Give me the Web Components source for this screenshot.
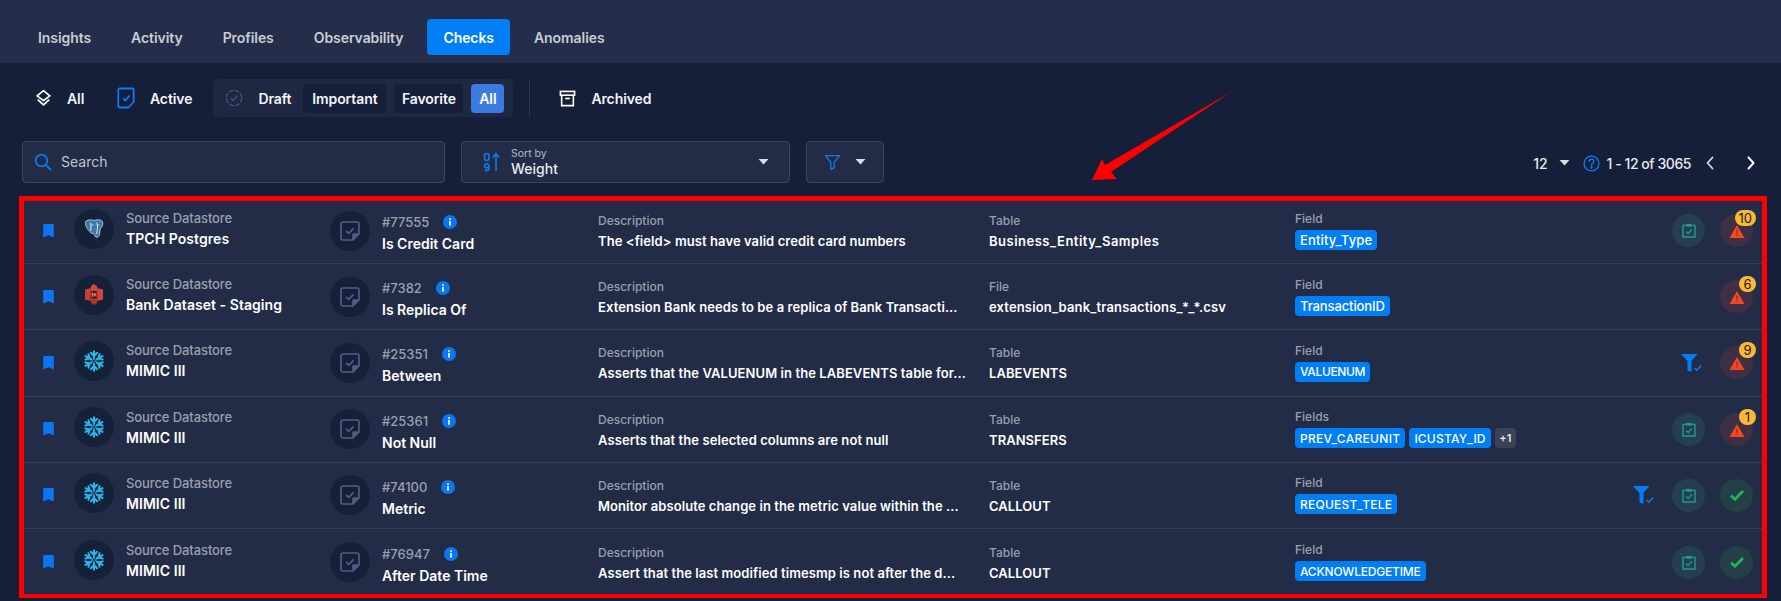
<!DOCTYPE html>
<html><head><meta charset="utf-8"><title>Checks</title>
<style>
html,body{margin:0;padding:0;background:#151f3a;font-family:Inter,"Noto Sans",sans-serif;color:#fff}
body{width:1781px;height:601px;overflow:hidden;position:relative}
</style></head><body>
<q-tabs>
  <q-tab>Insights</q-tab><q-tab>Activity</q-tab><q-tab>Profiles</q-tab><q-tab>Observability</q-tab><q-tab active>Checks</q-tab><q-tab>Anomalies</q-tab>
</q-tabs>
<q-filters></q-filters>
<q-toolbar></q-toolbar>
<q-list>
  <q-row src="pg" source="TPCH Postgres" cid="#77555" name="Is Credit Card" desc="The &lt;field&gt; must have valid credit card numbers" tlabel="Table" table="Business_Entity_Samples" tls=".5" flabel="Field" clip alert="10"><q-chip style="font-size:13px;letter-spacing:.15px">Entity_Type</q-chip></q-row>
  <q-row src="rs" source="Bank Dataset - Staging" cid="#7382" name="Is Replica Of" desc="Extension Bank needs to be a replica of Bank Transacti..." tlabel="File" table="extension_bank_transactions_*_*.csv" tls=".15" flabel="Field" alert="6"><q-chip style="font-size:13px;letter-spacing:-.1px">TransactionID</q-chip></q-row>
  <q-row src="sf" source="MIMIC III" cid="#25351" name="Between" desc="Asserts that the VALUENUM in the LABEVENTS table for..." tlabel="Table" table="LABEVENTS" flabel="Field" funnel alert="9"><q-chip style="letter-spacing:-.35px">VALUENUM</q-chip></q-row>
  <q-row src="sf" source="MIMIC III" cid="#25361" name="Not Null" desc="Asserts that the selected columns are not null" tlabel="Table" table="TRANSFERS" flabel="Fields" clip alert="1"><q-chip style="letter-spacing:.3px">PREV_CAREUNIT</q-chip><q-chip style="letter-spacing:.2px">ICUSTAY_ID</q-chip><q-chip more>+1</q-chip></q-row>
  <q-row src="sf" source="MIMIC III" cid="#74100" name="Metric" desc="Monitor absolute change in the metric value within the ..." tlabel="Table" table="CALLOUT" flabel="Field" funnel clip ok><q-chip style="letter-spacing:.25px">REQUEST_TELE</q-chip></q-row>
  <q-row src="sf" source="MIMIC III" cid="#76947" name="After Date Time" desc="Assert that the last modified timesmp is not after the d..." tlabel="Table" table="CALLOUT" flabel="Field" clip ok><q-chip style="letter-spacing:-.2px">ACKNOWLEDGETIME</q-chip></q-row>
</q-list>
<q-arrow></q-arrow>
<script>
const arm='<path d="M11 1.2V8M7.900 2.800 11 5.900 14.100 2.800"/>';
const ICONS={
 layers:'<svg viewBox="0 0 16 18" fill="none" stroke="#fff" stroke-width="1.700" stroke-linejoin="round"><path d="M8 1.500 14 6.500 8 11 2 6.500Z"/><path d="M2.500 10 8 15 13.500 10"/></svg>',
 active:'<svg viewBox="0 0 18 22" fill="none" stroke="#0a7bf0" stroke-width="1.800" stroke-linejoin="round"><path d="M2.500 1.500H15.500a1.200 1.200 0 0 1 1.200 1.200V15L11.500 20.500H2.500a1.200 1.200 0 0 1-1.200-1.200V2.700a1.200 1.200 0 0 1 1.200-1.200Z"/><path d="M6 11.500 8.300 13.600 12.500 8.500"/></svg>',
 draft:'<svg viewBox="0 0 20 20" fill="none" stroke="#4c5678" stroke-width="1.400"><circle cx="10" cy="10" r="8.500" stroke-dasharray="5 1.800"/><path d="M6.500 10.200 9 12.600 13.500 7.400"/></svg>',
 archive:'<svg viewBox="0 0 18 18" fill="none" stroke="#fff" stroke-width="1.700"><rect x="1.500" y="1.500" width="15" height="4"/><path d="M2.800 5.500V16.500H15.200V5.500"/><path d="M6.500 9H11.500"/></svg>',
 search:'<svg viewBox="0 0 18 18" fill="none" stroke="#0a7bf0" stroke-width="1.800" stroke-linecap="round"><circle cx="7.500" cy="7.500" r="5.800"/><path d="M11.800 11.800 16.500 16.500"/></svg>',
 sort:'<svg viewBox="0 0 18 20" fill="none" stroke="#0a7bf0" stroke-width="1.600"><rect x="1.500" y="1.800" width="4.400" height="6.400" rx="1.200"/><circle cx="3.700" cy="13.800" r="2.100"/><path d="M5.800 14V17.200Q5.800 18.400 4.400 18.400H1.800"/><path d="M13 19V2M9.800 5.400 13 1.800 16.200 5.400"/></svg>',
 filter:'<svg viewBox="0 0 18 18" fill="none" stroke="#0a7bf0" stroke-width="1.400" stroke-linejoin="round"><path d="M1.500 1.800H16.500L10.800 8.800V14.500L7.200 16.500V8.800Z"/></svg>',
 caret:'<svg viewBox="0 0 10 6"><path d="M0 0H10L5 5.500Z" fill="#d8dbe2"/></svg>',
 help:'<svg viewBox="0 0 16 16" fill="none" stroke="#0a7bf0" stroke-width="1.200"><circle cx="8" cy="8" r="7"/><path d="M5.800 6.200Q5.900 4 8 4 10.200 4 10.200 6 10.200 7.200 8.900 7.900 8 8.400 8 9.700" stroke-linecap="round"/><circle cx="8" cy="11.800" r=".5" fill="#0a7bf0"/></svg>',
 left:'<svg viewBox="0 0 8 14" fill="none" stroke="#d8dbe2" stroke-width="1.800" stroke-linecap="round" stroke-linejoin="round"><path d="M6.500 1.500 1.500 7 6.500 12.500"/></svg>',
 right:'<svg viewBox="0 0 8 14" fill="none" stroke="#fff" stroke-width="2" stroke-linecap="round" stroke-linejoin="round"><path d="M1.500 1.500 6.500 7 1.500 12.500"/></svg>',
 bookmark:'<svg viewBox="0 0 11 14"><path d="M1.400 0H9.600A1.200 1.200 0 0 1 10.800 1.200V13.400L5.500 11.200.2 13.400V1.200A1.200 1.200 0 0 1 1.400 0Z" fill="#0a76f2"/></svg>',
 note:'<svg viewBox="0 0 20 20" fill="none" stroke="#505c84" stroke-width="1.700" stroke-linejoin="round"><path d="M2.800 1H17.200A1.800 1.800 0 0 1 19 2.800V13L13 19H2.800A1.800 1.800 0 0 1 1 17.200V2.800A1.800 1.800 0 0 1 2.800 1Z"/><path d="M13 19V13.800A.8.8 0 0 1 13.800 13H19" fill="#505c84"/><path d="M6 10 8.700 12.400 13.600 7.300"/></svg>',
 info:'<svg viewBox="0 0 14 14"><circle cx="7" cy="7" r="7" fill="#0a76f2"/><rect x="6.100" y="5.900" width="1.800" height="4.800" fill="#e8f1ff"/><rect x="6.100" y="3.200" width="1.800" height="1.700" fill="#e8f1ff"/></svg>',
 clip:'<svg viewBox="0 0 14 15" fill="none" stroke="#1f9c90" stroke-width="1.400"><path d="M4 2.400H1V14H13V2.400H10"/><rect x="4.200" y=".9" width="5.600" height="2.800" fill="#1f9c90" stroke="none"/><path d="M4.200 8.600 6.200 10.500 9.900 6.400"/></svg>',
 warn:'<svg viewBox="0 0 16 14"><path d="M8 0 16 14H0Z" fill="#f4471f"/><rect x="7.400" y="5" width="1.200" height="4.400" fill="#7a2a22"/><rect x="7.400" y="10.400" width="1.200" height="1.400" fill="#7a2a22"/></svg>',
 ok:'<svg viewBox="0 0 14 11" fill="none" stroke="#22b45a" stroke-width="2.800"><path d="M1 5.600 5 9.200 13 1"/></svg>',
 funnel:'<svg viewBox="0 0 21 18"><path d="M0 0H16.500L10.500 7V17.400Q7.500 18 6.500 16V7Z" fill="#0a7bf0"/><path d="M13.500 14 15.800 16.200 20 11.600" fill="none" stroke="#1c6fe0" stroke-width="1.600"/></svg>',
 pg:'<svg viewBox="0 0 20 20"><path d="M1.800 2.200C4.500 .4 7.800 .6 10 1.500 12.500 .4 16.500 .3 18.300 2.300 19.600 4.500 18.400 7.500 16.600 9.300 15.700 11 16.200 15 14.800 17.200 13.600 18.900 11.700 18.600 11 17 10.500 15.400 9.600 14.300 8 14.300 6.500 14.300 5.800 12.800 4.800 11.500 2.800 9.300 .3 4.700 1.800 2.200Z" fill="#3f77a8" stroke="#c9d6e4" stroke-width=".8"/><path d="M6.800 3.500V12M12.800 3.500C14.200 7 13.300 11 12.600 15" stroke="#d9e4ef" stroke-width="1" fill="none"/><path d="M6.800 6H9.500M12.800 6H15.500" stroke="#d9e4ef" stroke-width=".8"/></svg>',
 rs:'<svg viewBox="0 0 18 21"><path d="M0 5.500 5.800 4V17L0 15.500Z" fill="#c8402f"/><path d="M18 5.500 12.200 4V17L18 15.500Z" fill="#d0473a"/><path d="M5.800 2.200 9 0 12.200 2.200V7.500L9 6.800 5.800 7.500Z" fill="#d6483a"/><path d="M5.800 18.800 9 21 12.200 18.800V13.800L9 14.500 5.800 13.800Z" fill="#b23327"/><path d="M5.800 8.500H12.200V12.800H5.800Z" fill="#a12c22"/><path d="M7.500 8.300V13" stroke="#e08a7a" stroke-width=".8"/><circle cx="9.800" cy="10.600" r="1.200" fill="#e08a7a"/></svg>',
 sf:`<svg viewBox="0 0 22 22" fill="none" stroke="#29b5e8" stroke-width="2.100" stroke-linecap="round" stroke-linejoin="round">${[0,60,120,180,240,300].map(d=>`<g transform="rotate(${d} 11 11)">${arm}</g>`).join('')}<path d="M11 9.400 12.600 11 11 12.600 9.400 11Z" stroke-width="1"/></svg>`
};
class QIcon extends HTMLElement{connectedCallback(){
  const w=this.getAttribute('w')||16,h=this.getAttribute('h')||16;
  this.attachShadow({mode:'open'}).innerHTML=`<style>:host{display:block;width:${w}px;height:${h}px;flex:none}svg{display:block;width:100%;height:100%}</style>${ICONS[this.getAttribute('name')]}`;
}}
class QTabs extends HTMLElement{constructor(){super();this.attachShadow({mode:'open'}).innerHTML=`<style>:host{display:flex;gap:8px;background:#242e4a;padding:19px 22px 8px;height:36px}</style><slot></slot>`}}
class QTab extends HTMLElement{constructor(){super();this.attachShadow({mode:'open'}).innerHTML=`<style>:host{display:flex;align-items:center;padding:0 16px;height:36px;border-radius:4px;font-size:14px;font-weight:600;letter-spacing:-.07px;color:#c9ccd4}:host([active]){background:#007ef6;color:#fff}</style><slot></slot>`}}
class QFilters extends HTMLElement{constructor(){super();this.attachShadow({mode:'open'}).innerHTML=`<style>
:host{display:flex;align-items:center;height:38px;margin-top:16px;padding-left:35px;font-size:14px;font-weight:600;letter-spacing:-.1px;color:#f3f4f6}
.it{display:flex;align-items:center}
.group{display:flex;align-items:center;height:38px;box-sizing:border-box;margin-left:21px;background:#1e2842;border-radius:4px;padding:0 9px 0 12px}
.btn{display:flex;align-items:center;justify-content:center;height:29px;border-radius:4px;background:#151f3a}
.sel{background:#3b7be0;color:#fff}
.div{width:1px;height:38px;background:#2b3550;margin-left:16px}
</style>
<div class="it"><q-icon name="layers" w="17" h="19"></q-icon><span style="margin-left:15px;width:17px">All</span></div>
<div class="it" style="margin-left:33px"><q-icon name="active" w="18" h="22"></q-icon><span style="margin-left:15px">Active</span></div>
<div class="group"><q-icon name="draft" w="18" h="18"></q-icon><span style="margin-left:15px;width:34px">Draft</span>
<div class="btn" style="margin-left:11px;width:83px">Important</div><div class="btn" style="margin-left:8px;width:69px">Favorite</div><div class="btn sel" style="margin-left:8px;width:33px">All</div></div>
<div class="div"></div>
<div class="it" style="margin-left:29px"><q-icon name="archive" w="17" h="17"></q-icon><span style="margin-left:15px">Archived</span></div>`}}
class QToolbar extends HTMLElement{constructor(){super();this.attachShadow({mode:'open'}).innerHTML=`<style>
:host{display:flex;align-items:center;height:42px;margin-top:24px;padding-left:22px}
.box{box-sizing:border-box;height:42px;background:#232c47;border:1px solid #3a4462;border-radius:4px;display:flex;align-items:center}
.s{width:423px;padding-left:11px;font-size:14px;color:#bfc3cd}
.s span{margin-left:9px;padding-bottom:2px}
.sort{width:329px;margin-left:16px;padding:0 20px 0 21px}
.sort .t{margin-left:10px;flex:1;display:flex;flex-direction:column;padding-bottom:1px}
.t small{font-size:10.5px;line-height:13px;color:#b5b9c4}
.t b{font-size:14px;line-height:17px;font-weight:500;color:#e6e8ec}
.f{width:78px;margin-left:16px;padding-left:17px;gap:14px}
.pg{margin-left:auto;display:flex;align-items:center;padding-right:26px;padding-top:2px;font-size:14px;color:#e8eaee;font-weight:500}
</style>
<div class="box s"><q-icon name="search" w="18" h="18"></q-icon><span>Search</span></div>
<div class="box sort"><q-icon name="sort" w="18" h="20"></q-icon><div class="t"><small>Sort by</small><b>Weight</b></div><q-icon name="caret" w="11" h="6"></q-icon></div>
<div class="box f"><q-icon name="filter" w="17" h="17"></q-icon><q-icon name="caret" w="11" h="6"></q-icon></div>
<div class="pg"><span>12</span><q-icon name="caret" w="11" h="6" style="margin-left:11px"></q-icon><q-icon name="help" w="17" h="17" style="margin-left:13px"></q-icon><span style="margin-left:7px;letter-spacing:-.45px">1 - 12 of 3065</span><q-icon name="left" w="8" h="14" style="margin-left:15px"></q-icon><q-icon name="right" w="8" h="14" style="margin-left:33px"></q-icon></div>`}}
class QList extends HTMLElement{constructor(){super();this.attachShadow({mode:'open'}).innerHTML=`<style>:host{display:block;box-sizing:border-box;margin:13px 14px 0 19px;height:402px;border:5px solid #fe0000;border-bottom-width:4px;background:#232c47;overflow:hidden}::slotted(:first-child){margin-top:-3px}</style><slot></slot>`}}
class QChip extends HTMLElement{constructor(){super();this.attachShadow({mode:'open'}).innerHTML=`<style>:host{display:inline-flex;align-items:center;height:20px;padding:0 5px;border-radius:4px;background:#007ef6;color:#fff;font-size:12px;font-weight:500;white-space:nowrap}:host([more]){background:#3a4257;padding:0 4.500px;font-weight:600;color:#e4e6ea;font-size:11px}</style><slot></slot>`}}
class QRow extends HTMLElement{connectedCallback(){
  const a=n=>this.getAttribute(n)||'';const esc=s=>s.replace(/&/g,'&amp;').replace(/</g,'&lt;');
  const act=[];
  if(this.hasAttribute('funnel'))act.push(`<q-icon name="funnel" w="21" h="18" class="fn"></q-icon>`);
  if(this.hasAttribute('clip'))act.push(`<div class="circ teal"><q-icon name="clip" w="14" h="15"></q-icon></div>`);
  const fin=this.hasAttribute('ok')?`<div class="circ green"><q-icon name="ok" w="14" h="11"></q-icon></div>`:
    `<div class="circ red"><q-icon name="warn" w="16" h="13" class="tri"></q-icon><span class="badge">${a('alert')}</span></div>`;
  const s=a('src');
  this.attachShadow({mode:'open'}).innerHTML=`<style>
:host{display:block;height:66.2px}
.r{display:grid;box-sizing:border-box;height:66.2px;border-bottom:1px solid #363f5a;padding-left:19px;align-items:center;
 grid-template-columns:31px 52px 204px 52px 216px 391px 306px 1fr auto}
:host(:last-child) .r{border-bottom:0}
.dark{width:40px;height:40px;border-radius:50%;background:#152039;display:flex;align-items:center;justify-content:center}
.av{margin-bottom:4px}
.lb{font-size:13px;line-height:16px;color:#9a9fae;font-weight:500;white-space:nowrap}
.sm{font-size:12px}
.v{font-size:14px;line-height:18px;color:#fff;font-weight:600;white-space:nowrap}
.d{font-size:13px;letter-spacing:.08px}
.st{display:flex;flex-direction:column}
.src{margin-bottom:3px;gap:4px}
.src .lb{letter-spacing:-.1px}
.src .v{letter-spacing:.05px}
.idc{margin-top:6px;gap:5px}
.id{display:flex;align-items:center;gap:14px}
.desc{gap:3px;margin-top:2px}
.fld{gap:3px;margin-top:-1px}
.chips{display:flex;gap:4px}
.acts{display:flex;align-items:center;padding-right:9px}
.circ{width:33px;height:33px;border-radius:50%;display:flex;align-items:center;justify-content:center;position:relative;flex:none}
.teal{background:#253f50;margin-right:15px}
.red{background:#3e2f43}
.green{background:#243f45}
.fn{margin-right:18px}
.tri{margin-top:2px}
.badge{position:absolute;top:-4px;right:-3px;min-width:17px;height:16px;padding:0 4px;box-sizing:border-box;border-radius:8px;background:#fbb836;color:#1a1a1a;font-size:13px;font-weight:400;display:flex;align-items:center;justify-content:center}
</style><div class="r">
<q-icon name="bookmark" w="11" h="14"></q-icon>
<div class="dark av"><q-icon name="${s}" w="${s=='sf'?22:s=='rs'?18:20}" h="${s=='sf'?22:s=='rs'?21:20}"></q-icon></div>
<div class="st src"><span class="lb">Source Datastore</span><span class="v">${esc(a('source'))}</span></div>
<div class="dark"><q-icon name="note" w="20" h="20"></q-icon></div>
<div class="st idc"><span class="lb id">${esc(a('cid'))}<q-icon name="info" w="14" h="14"></q-icon></span><span class="v">${esc(a('name'))}</span></div>
<div class="st desc"><span class="lb sm">Description</span><span class="v d">${esc(a('desc'))}</span></div>
<div class="st desc"><span class="lb sm">${a('tlabel')}</span><span class="v d" style="letter-spacing:${a('tls')||'.05'}px">${esc(a('table'))}</span></div>
<div class="st fld"><span class="lb sm">${a('flabel')}</span><div class="chips"><slot></slot></div></div>
<div class="acts">${act.join('')}${fin}</div>
</div>`;
}}
class QArrow extends HTMLElement{constructor(){super();this.attachShadow({mode:'open'}).innerHTML=`<style>:host{position:absolute;left:1085px;top:88px;width:150px;height:96px}svg{display:block}</style><svg width="150" height="96" viewBox="1085 88 150 96"><path d="M1231 92 1111 172 1117 179 1092 180 1102 159 1105 165Z" fill="#fe0000"/></svg>`}}
customElements.define('q-icon',QIcon);customElements.define('q-tabs',QTabs);customElements.define('q-tab',QTab);customElements.define('q-filters',QFilters);customElements.define('q-toolbar',QToolbar);customElements.define('q-list',QList);customElements.define('q-chip',QChip);customElements.define('q-row',QRow);customElements.define('q-arrow',QArrow);
</script>
</body></html>
